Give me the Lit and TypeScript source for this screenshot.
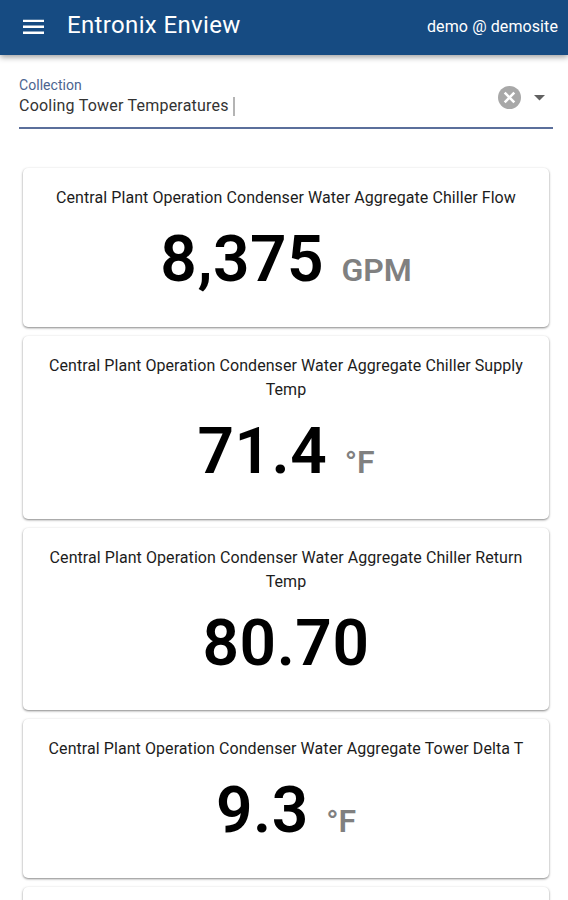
import { LitElement, html, css } from "lit";
import { customElement, property } from "lit/decorators.js";

@customElement("metric-card")
class MetricCard extends LitElement {
  @property() label = "";
  @property() value = "";
  @property() unit = "";
  static styles = css`
    :host { display: block; box-sizing: border-box; background: #fff; border-radius: 5px; padding: 18px 20px 0; text-align: center;
      box-shadow: 0 1px 3px rgba(0,0,0,.22), 0 1px 2px rgba(0,0,0,.3); }
    .label { font-size: 16px; line-height: 24px; letter-spacing: .07px; color: #1c1c1c; }
    .reading { display: flex; justify-content: center; align-items: baseline; gap: 17.5px; height: 98px; line-height: 100px; }
    .value { font-size: 64px; font-weight: 600; letter-spacing: .5px; color: #000; }
    .unit { font-size: 32px; font-weight: 600; letter-spacing: -.1px; color: #808080; }
  `;
  render() {
    return html`<div class="label">${this.label}</div>
      <div class="reading"><span class="value">${this.value}</span>${this.unit ? html`<span class="unit">${this.unit}</span>` : ""}</div>`;
  }
}

const metrics = [
  { label: "Central Plant Operation Condenser Water Aggregate Chiller Flow", value: "8,375", unit: "GPM", h: 159 },
  { label: "Central Plant Operation Condenser Water Aggregate Chiller Supply Temp", value: "71.4", unit: "°F", h: 183 },
  { label: "Central Plant Operation Condenser Water Aggregate Chiller Return Temp", value: "80.70", unit: "", h: 182 },
  { label: "Central Plant Operation Condenser Water Aggregate Tower Delta T", value: "9.3", unit: "°F", h: 159 },
  { label: "", value: "", unit: "", h: 159 },
];

@customElement("app-root")
class AppRoot extends LitElement {
  static styles = css`
    :host { display: block; height: 900px; overflow: hidden; background: #fff; font-family: Roboto, sans-serif; }
    header { box-sizing: border-box; height: 55px; background: #164b82; color: #fff; display: flex; align-items: center; padding: 0 10px 4px 23px;
      box-shadow: 0 2px 6px rgba(0,0,0,.4); }
    .menu { display: block; margin-top: 3px; }
    h1 { margin: -2px auto 0 23px; font-size: 24px; font-weight: 400; letter-spacing: .35px; }
    .user { font-size: 16px; margin-top: 2px; letter-spacing: .1px; }
    .field { margin: 21px 15px 0 19px; height: 51px; border-bottom: 2px solid #5b6f9b; display: flex; align-items: flex-start; }
    .text { flex: 1; }
    .caption { font-size: 14px; line-height: 18px; color: #4b648f; letter-spacing: .05px; }
    .selected { font-size: 16px; line-height: 24px; color: #333; letter-spacing: .22px; display: flex; align-items: center; }
    .caret { width: 2px; height: 19px; background: #b4b4b4; margin-left: 4px; }
    .clear { margin-top: 10px; }
    .arrow { margin: 19px 8px 0 13px; }
    main { display: flex; flex-direction: column; gap: 9px; padding: 39px 19px 0 23px; }
  `;
  render() {
    return html`
      <header>
        <svg class="menu" width="21" height="16" viewBox="0 0 21 16" fill="#fff"><path d="M0 .7h21v2.4H0zM0 6.6h21v2.4H0zM0 12.5h21v2.4H0z"/></svg>
        <h1>Entronix Enview</h1>
        <span class="user">demo @ demosite</span>
      </header>
      <div class="field">
        <div class="text">
          <div class="caption">Collection</div>
          <div class="selected">Cooling Tower Temperatures<span class="caret"></span></div>
        </div>
        <svg class="clear" width="23" height="23" viewBox="0 0 23 23"><circle cx="11.5" cy="11.5" r="11.5" fill="#a8a8a8"/><path d="M6.7 6.7l9.6 9.6M16.3 6.7l-9.6 9.6" stroke="#fff" stroke-width="2.6"/></svg>
        <svg class="arrow" width="11" height="6" viewBox="0 0 11 6"><path d="M0 0h11L5.5 5.5z" fill="#616161"/></svg>
      </div>
      <main>
        ${metrics.map(m => html`<metric-card style="height:${m.h}px" .label=${m.label} .value=${m.value} .unit=${m.unit}></metric-card>`)}
      </main>`;
  }
}
